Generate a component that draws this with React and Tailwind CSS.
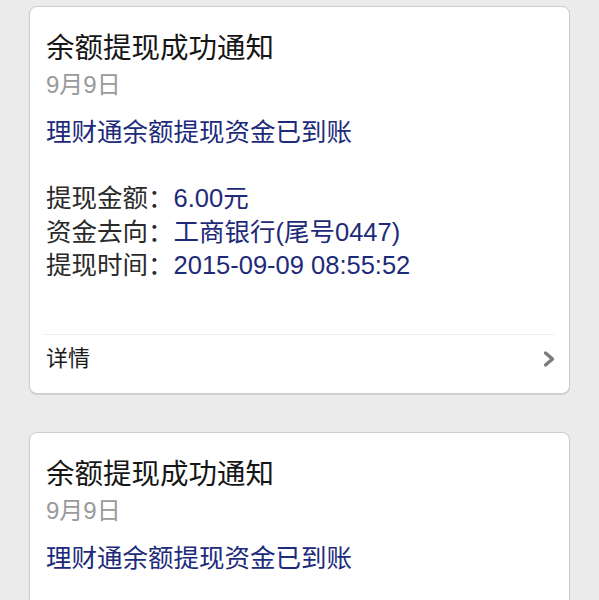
import React from 'react';

const notices = [
  {
    title: '余额提现成功通知',
    date: '9月9日',
    summary: '理财通余额提现资金已到账',
    rows: [
      { label: '提现金额：', value: '6.00元' },
      { label: '资金去向：', value: '工商银行(尾号0447)' },
      { label: '提现时间：', value: '2015-09-09 08:55:52' },
    ],
  },
  {
    title: '余额提现成功通知',
    date: '9月9日',
    summary: '理财通余额提现资金已到账',
    rows: [
      { label: '提现金额：', value: '6.00元' },
      { label: '资金去向：', value: '工商银行(尾号0447)' },
      { label: '提现时间：', value: '2015-09-09 08:55:52' },
    ],
  },
];

function Chevron() {
  return (
    <svg width="12" height="18" viewBox="0 0 12 18" className="shrink-0">
      <path d="M2.5 3 L9.5 9 L2.5 15" fill="none" stroke="#7c7c7c" strokeWidth="3.4" strokeLinecap="round" strokeLinejoin="round" />
    </svg>
  );
}

function NoticeCard({ notice }) {
  return (
    <div className="bg-white border border-[#cdcdcd] rounded-[8px] shadow-[0_1px_1px_rgba(0,0,0,0.12)]">
      <div className="pl-4 pr-4 pt-[23px]">
        <div className="text-[28.5px] leading-[36px] text-[#161616]">{notice.title}</div>
        <div className="mt-[3px] text-[24px] leading-[32px] text-[#9a9a9a]">{notice.date}</div>
        <div className="mt-[14px] text-[25.5px] leading-[34px] text-[#202a7a]">{notice.summary}</div>
        <div className="mt-[33px] text-[25.5px] leading-[33.5px]">
          {notice.rows.map((row, index) => (
            <div key={index} className="flex whitespace-nowrap">
              <span className="text-[#2a2a2a]">{row.label}</span>
              <span className="text-[#1e2a78]">{row.value}</span>
            </div>
          ))}
        </div>
      </div>
      <div className="mt-[51px] mx-[14px] border-t border-[#ececec]" />
      <div className="flex items-center justify-between pl-4 pr-[14px] pt-[9px] pb-[19px]">
        <span className="text-[22px] leading-[30px] text-[#1a1a1a]">详情</span>
        <Chevron />
      </div>
    </div>
  );
}

export default function App() {
  return (
    <div
      className="h-[600px] overflow-hidden bg-[#ebebeb] px-[29px] pt-[6px] flex flex-col gap-[38px]"
      style={{ fontFamily: '"Liberation Sans", "Noto Sans CJK SC", sans-serif' }}
    >
      {notices.map((notice, index) => (
        <NoticeCard key={index} notice={notice} />
      ))}
    </div>
  );
}
